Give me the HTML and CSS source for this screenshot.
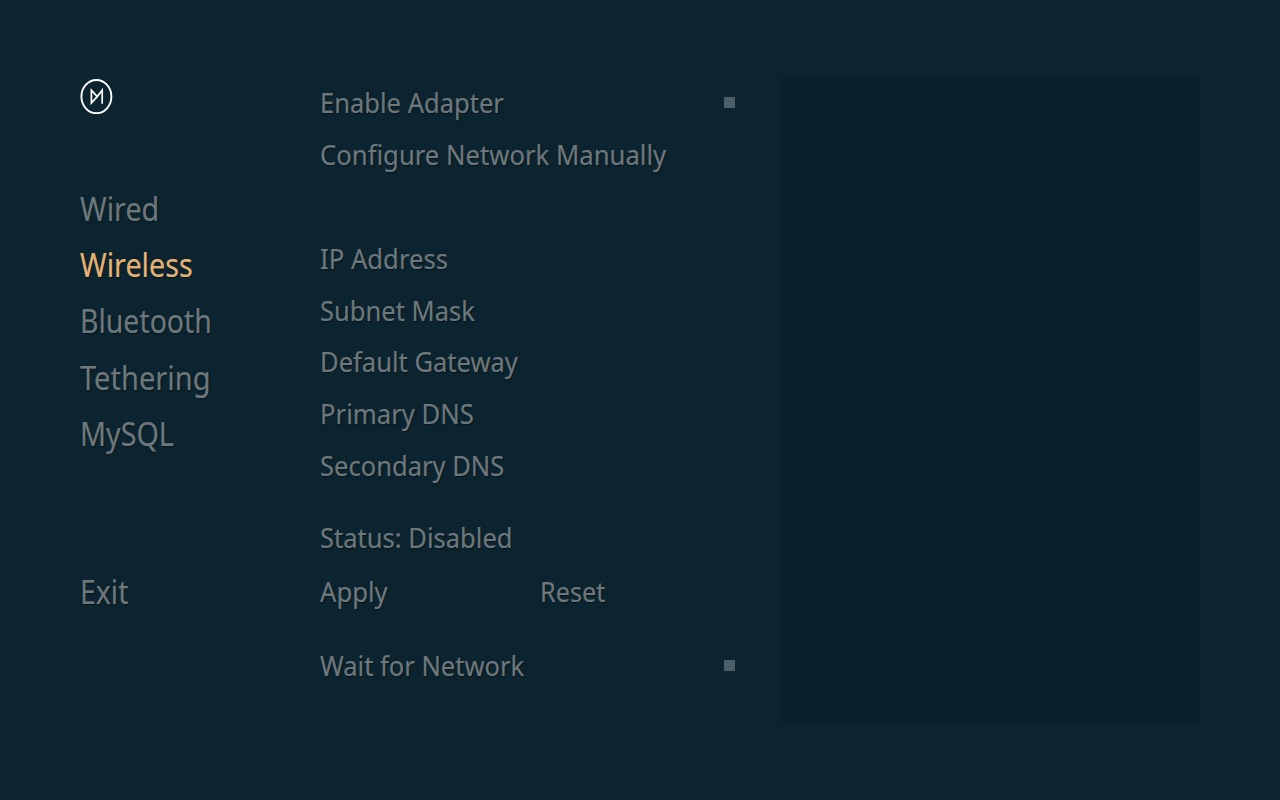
FILE: index.html
```html
<!DOCTYPE html>
<html lang="en">
<head>
<meta charset="utf-8">
<title>Network Settings</title>
<link rel="stylesheet" href="styles.css">
</head>
<body>
<main class="screen">
  <nav class="sidebar">
    <svg class="logo" viewBox="0 0 34 36" width="34" height="36" fill="none" stroke="#fff" stroke-width="1.9">
      <ellipse cx="16.4" cy="18.6" rx="15" ry="16.6"/>
      <path stroke-width="1.7" d="M17.2 18.6L11.4 25V12.2L17.2 18.6L22.2 12.2V25.8"/>
    </svg>
    <ul class="menu">
      <li><span class="label">Wired</span></li>
      <li class="active"><span class="label">Wireless</span></li>
      <li><span class="label narrow">Bluetooth</span></li>
      <li><span class="label tethering">Tethering</span></li>
      <li><span class="label">MySQL</span></li>
    </ul>
    <div class="exit"><span class="label narrow">Exit</span></div>
  </nav>
  <section class="settings">
    <div class="row"><span class="label">Enable Adapter</span><i class="check"></i></div>
    <div class="row"><span class="label wide">Configure Network Manually</span></div>
    <div class="fields">
      <div class="row"><span class="label wide">IP Address</span></div>
      <div class="row"><span class="label">Subnet Mask</span></div>
      <div class="row"><span class="label">Default Gateway</span></div>
      <div class="row"><span class="label wide">Primary DNS</span></div>
      <div class="row"><span class="label">Secondary DNS</span></div>
    </div>
    <div class="row status"><span class="label">Status: Disabled</span></div>
    <div class="row actions"><span class="label wide">Apply</span><span class="label reset">Reset</span></div>
    <div class="row wait"><span class="label">Wait for Network</span><i class="check"></i></div>
  </section>
  <aside class="panel"></aside>
</main>
</body>
</html>
```

FILE: styles.css
```css
* { box-sizing: border-box; }
body { margin: 0; background: #0c242f; color: #6d777c; font-family: "Noto Sans", sans-serif; }
.screen { display: grid; grid-template-columns: 240px 460px 420px; width: 1280px; height: 800px; padding: 78px 80px; overflow: hidden; }
.label { display: inline-block; white-space: nowrap; transform: scaleX(.946); transform-origin: left center; text-shadow: 1px 1px 1px #07161d; -webkit-text-stroke: .2px currentColor; }
.label.wide { transform: scaleX(.951); }
.label.reset { transform: scaleX(.935); }
.logo { display: block; }
.menu { list-style: none; margin: 67px 0 0; padding: 0; }
.menu li, .exit { height: 56.2px; line-height: 56.2px; font-size: 33px; }
.menu .label { transform: scaleX(.87); }
.menu .narrow, .exit .narrow { transform: scaleX(.861); }
.menu .tethering { transform: scaleX(.88); }
.menu .active { color: #e4b274; }
.exit { margin-top: 102px; }
.settings { margin-top: -1px; }
.row { display: flex; align-items: center; height: 51.8px; font-size: 27px; line-height: 51.8px; }
.check { width: 11px; height: 11px; margin-left: auto; margin-right: 45px; background: #4c5e68; }
.fields { margin-top: 52.2px; }
.status { margin-top: 19.8px; }
.actions { display: grid; grid-template-columns: 220px 1fr; margin-top: 2.5px; }
.wait { margin-top: 22px; }
.panel { height: 644px; background: #0a202a; }
```
